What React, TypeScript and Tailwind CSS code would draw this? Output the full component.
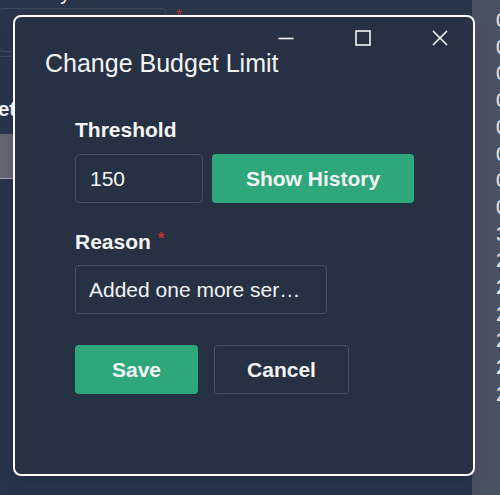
import React from "react";

const digits = ["0", "0", "0", "0", "0", "0", "0", "0", "3", "2", "2", "2", "2", "2", "2"];

function WindowControls() {
  return (
    <div className="flex justify-end gap-[61px] pr-[25px] pt-[13px]">
      {/* minimize */}
      <svg width="16" height="16" viewBox="0 0 16 16" fill="none" stroke="#f3f4f6" strokeWidth="1.6">
        <path d="M0.5 8.5 H15.5" />
      </svg>
      {/* maximize */}
      <svg width="16" height="16" viewBox="0 0 16 16" fill="none" stroke="#f3f4f6" strokeWidth="1.6">
        <rect x="1" y="1" width="14" height="14" />
      </svg>
      {/* close */}
      <svg width="16" height="16" viewBox="0 0 16 16" fill="none" stroke="#f3f4f6" strokeWidth="1.6">
        <path d="M1 1 L15 15 M15 1 L1 15" />
      </svg>
    </div>
  );
}

export default function App() {
  return (
    <div className="relative h-[495px] w-[500px] overflow-hidden bg-[#27344a] font-['Liberation_Sans',Arial,sans-serif] text-[#f3f4f6]">
      {/* page behind the dialog */}
      <div className="flex h-full">
        <div className="flex-1 overflow-hidden">
          <div className="-mt-[18px] pl-[8px] text-[20px] leading-[22px]">Priority</div>
          <div className="mt-[4px] flex items-start">
            <div className="h-[44px] w-[167px] -ml-[1px] rounded-[4px] border border-[#3d4a5e]" />
            <span className="ml-[10px] -mt-[4px] text-[16px] text-[#c53030]">*</span>
          </div>
          <div className="mt-[4px] h-px w-full bg-[#3d4a5e]" />
          <div className="mt-[40px] -ml-[56px] text-[21px] font-bold leading-[24px]">Budget</div>
          <div className="mt-[13px] h-[45px] w-[200px] border-b border-[#9ca3af] bg-[#5f6672]" />
        </div>
        <div className="w-[28px] bg-[#495163] pl-[24px] pt-[7px] text-[20px] leading-[26.7px] text-[#e5e7eb]">
          {digits.map((d, i) => (
            <div key={i}>{d}</div>
          ))}
        </div>
      </div>

      {/* dialog */}
      <div className="absolute left-[13px] top-[15px] flex h-[461px] w-[462px] flex-col rounded-[8px] border-2 border-white bg-[#263244] shadow-lg">
        <WindowControls />
        <h2 className="mt-[2px] pl-[30px] text-[25px] font-normal leading-[30px]">Change Budget Limit</h2>

        <div className="pl-[60px]">
          <label className="mt-[40px] block text-[21px] font-bold leading-[24px]">Threshold</label>
          <div className="mt-[12px] flex gap-[9px]">
            <div className="flex h-[49px] w-[128px] items-center rounded-[4px] border border-[#46526a] px-[14px] text-[21px]">
              150
            </div>
            <button className="h-[49px] w-[202px] rounded-[4px] bg-[#2ea87b] text-[21px] font-bold">
              Show History
            </button>
          </div>

          <label className="mt-[27px] flex items-start text-[21px] font-bold leading-[24px]">
            Reason
            <span className="ml-[7px] text-[17px] leading-[17px] text-[#c53030]">*</span>
          </label>
          <div className="mt-[11px] flex h-[49px] w-[252px] items-center rounded-[4px] border border-[#46526a] px-[13px] text-[21px] whitespace-nowrap">
            Added one more ser…
          </div>

          <div className="mt-[31px] flex gap-[16px]">
            <button className="h-[49px] w-[123px] rounded-[4px] bg-[#2ea87b] text-[21px] font-bold">Save</button>
            <button className="h-[49px] w-[135px] rounded-[4px] border border-[#46526a] text-[21px] font-bold">
              Cancel
            </button>
          </div>
        </div>
      </div>
    </div>
  );
}
